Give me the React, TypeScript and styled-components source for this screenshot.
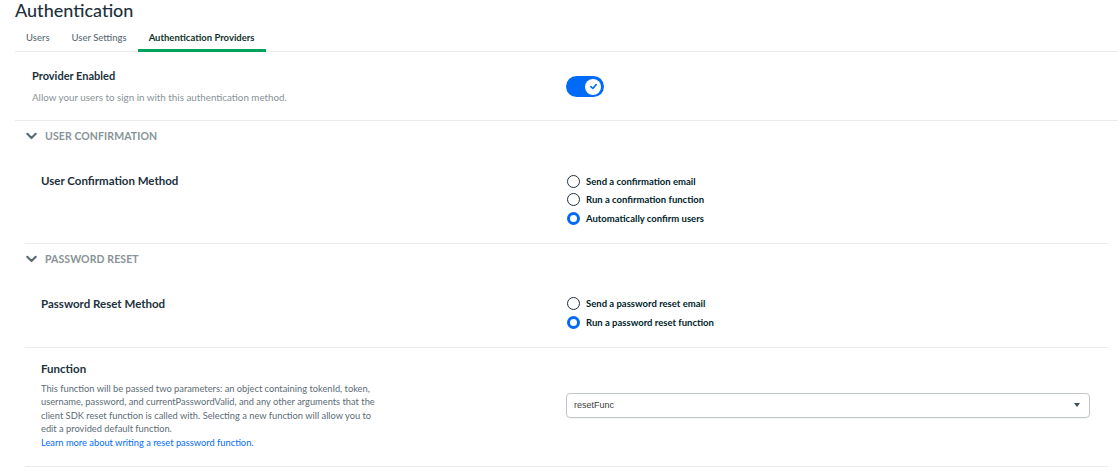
import React from "react";
import styled, { createGlobalStyle } from "styled-components";

const Global = createGlobalStyle`
  html, body { margin: 0; padding: 0; background: #fff; }
  body { font-family: "Lato", "Liberation Sans", sans-serif; color: #21313c; }
  * { box-sizing: border-box; }
`;

const Page = styled.div`
  width: 1118px;
  padding-left: 15px;
`;

const Title = styled.h1`
  margin: 0;
  font-size: 18px;
  line-height: 21px;
  font-weight: 500;
  color: #21313c;
`;

const TabBar = styled.nav`
  display: flex;
  margin-top: 7px;
  border-bottom: 1px solid #e8edeb;
`;

const Tab = styled.div<{ $active?: boolean }>`
  padding: 0 11px 2px;
  height: 24px;
  display: flex;
  align-items: center;
  font-size: 9.5px;
  font-weight: ${(p) => (p.$active ? 700 : 500)};
  color: ${(p) => (p.$active ? "#12332b" : "#5c6c75")};
  border-bottom: 3px solid ${(p) => (p.$active ? "#00a35c" : "transparent")};
  margin-bottom: -1px;
`;

const TopRow = styled.div`
  display: grid;
  grid-template-columns: 534px 1fr;
  align-items: center;
  padding: 17px 0 16px 17px;
  border-bottom: 1px solid #e8edeb;
`;

const Label = styled.div`
  font-size: 11px;
  line-height: 14px;
  font-weight: 700;
  color: #21313c;
`;

const Hint = styled.div`
  margin-top: 8px;
  font-size: 9.8px;
  line-height: 13px;
  color: #889397;
`;

const Toggle = styled.div`
  width: 38px;
  height: 21px;
  border-radius: 11px;
  background: #016bf8;
  display: flex;
  align-items: center;
  justify-content: flex-end;
  padding-right: 3px;
`;

const Knob = styled.div`
  width: 16px;
  height: 16px;
  border-radius: 50%;
  background: #fff;
  display: flex;
  align-items: center;
  justify-content: center;
`;

const Section = styled.section`
  margin: 0 10px 0 0;
`;

const SectionHeader = styled.div`
  height: 30px;
  display: flex;
  align-items: center;
  gap: 8px;
  padding-left: 11px;
  font-size: 10.5px;
  font-weight: 700;
  letter-spacing: 0.1px;
  color: #889397;
  text-transform: uppercase;
`;

const Row = styled.div<{ $center?: boolean; $pt: number; $pb: number }>`
  display: grid;
  grid-template-columns: 525px 1fr;
  align-items: ${(p) => (p.$center ? "center" : "start")};
  margin-left: 10px;
  padding: ${(p) => `${p.$pt}px 18px ${p.$pb}px 16px`};
  border-bottom: 1px solid #e8edeb;
`;

const RowLabel = styled(Label)<{ $lh?: number }>`
  font-size: 11.5px;
  line-height: ${(p) => p.$lh ?? 18}px;
`;

const RadioGroup = styled.div`
  display: flex;
  flex-direction: column;
  padding-left: 1px;
`;

const RadioItem = styled.label`
  height: 18.5px;
  display: flex;
  align-items: center;
  gap: 6px;
  font-size: 9.5px;
  font-weight: 700;
  color: #001e2b;
`;

const RadioCircle = styled.span<{ $checked?: boolean }>`
  width: 13px;
  height: 13px;
  border-radius: 50%;
  border: ${(p) => (p.$checked ? "3.5px solid #016bf8" : "1.8px solid #21313c")};
  background: #fff;
  flex: none;
`;

const Desc = styled.div`
  margin-top: 6px;
  max-width: 348px;
  font-size: 9.3px;
  line-height: 13.6px;
  color: #5c6c75;
`;

const Link = styled.a`
  display: block;
  color: #016bf8;
  text-decoration: none;
`;

const Select = styled.div`
  height: 25px;
  border: 1px solid #c1c7c6;
  border-radius: 4px;
  display: flex;
  align-items: center;
  justify-content: space-between;
  padding: 0 9px 0 7px;
  font-family: "Liberation Sans", Arial, sans-serif;
  font-size: 9px;
  color: #3d3d3d;
  box-shadow: 0 1px 1px rgba(0, 0, 0, 0.04);
`;

const Caret = styled.span`
  width: 0;
  height: 0;
  border-left: 3.5px solid transparent;
  border-right: 3.5px solid transparent;
  border-top: 4px solid #3d4f58;
`;

const Chevron = () => (
  <svg width="11" height="8" viewBox="0 0 11 8">
    <path d="M1.3 1.8 L5.5 6 L9.7 1.8" fill="none" stroke="#5c6c75" strokeWidth="2.2" strokeLinecap="round" strokeLinejoin="round" />
  </svg>
);

const Radio = ({ label, checked }: { label: string; checked?: boolean }) => (
  <RadioItem>
    <RadioCircle $checked={checked} />
    {label}
  </RadioItem>
);

export default function App() {
  return (
    <Page>
      <Global />
      <Title>Authentication</Title>
      <TabBar>
        <Tab>Users</Tab>
        <Tab>User Settings</Tab>
        <Tab $active>Authentication Providers</Tab>
      </TabBar>

      <TopRow>
        <div>
          <Label>Provider Enabled</Label>
          <Hint>Allow your users to sign in with this authentication method.</Hint>
        </div>
        <div>
          <Toggle>
            <Knob>
              <svg width="9" height="9" viewBox="0 0 10 10">
                <path d="M2 5.2 L4.2 7.2 L8 2.8" fill="none" stroke="#016bf8" strokeWidth="1.8" strokeLinecap="round" strokeLinejoin="round" />
              </svg>
            </Knob>
          </Toggle>
        </div>
      </TopRow>

      <Section>
        <SectionHeader>
          <Chevron />
          User Confirmation
        </SectionHeader>
        <Row $pt={21} $pb={15}>
          <RowLabel>User Confirmation Method</RowLabel>
          <RadioGroup>
            <Radio label="Send a confirmation email" />
            <Radio label="Run a confirmation function" />
            <Radio label="Automatically confirm users" checked />
          </RadioGroup>
        </Row>
      </Section>

      <Section>
        <SectionHeader>
          <Chevron />
          Password Reset
        </SectionHeader>
        <Row $pt={21} $pb={15}>
          <RowLabel>Password Reset Method</RowLabel>
          <RadioGroup>
            <Radio label="Send a password reset email" />
            <Radio label="Run a password reset function" checked />
          </RadioGroup>
        </Row>
        <Row $center $pt={14} $pb={17}>
          <div>
            <RowLabel $lh={14}>Function</RowLabel>
            <Desc>
              This function will be passed two parameters: an object containing tokenId, token,
              username, password, and currentPasswordValid, and any other arguments that the
              client SDK reset function is called with. Selecting a new function will allow you to
              edit a provided default function.
              <Link href="#">Learn more about writing a reset password function.</Link>
            </Desc>
          </div>
          <Select>
            <span>resetFunc</span>
            <Caret />
          </Select>
        </Row>
      </Section>
    </Page>
  );
}
